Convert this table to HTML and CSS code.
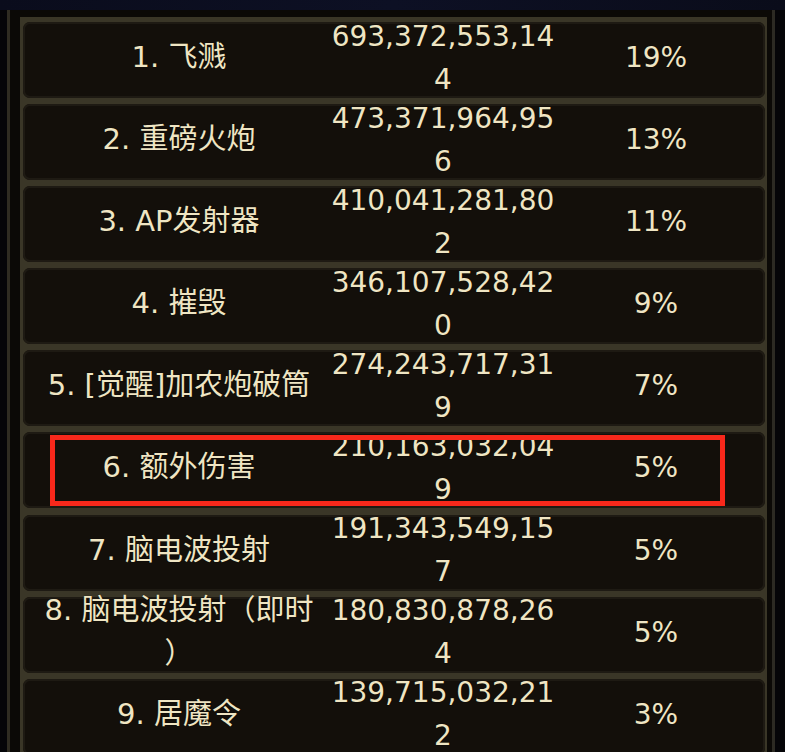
FILE: index.html
```html
<!DOCTYPE html>
<html lang="zh-CN">
<head>
  <meta charset="UTF-8">
  <title>伤害统计</title>
  <link rel="stylesheet" href="styles.css">
</head>
<body>
  <div class="topbar"></div>

  <div class="frame">
    <div class="list">
      <div class="row">
        <div class="name">1. 飞溅</div>
        <div class="dmg">693,372,553,144</div>
        <div class="pct">19%</div>
      </div>
      <div class="row">
        <div class="name">2. 重磅火炮</div>
        <div class="dmg">473,371,964,956</div>
        <div class="pct">13%</div>
      </div>
      <div class="row">
        <div class="name">3. AP发射器</div>
        <div class="dmg">410,041,281,802</div>
        <div class="pct">11%</div>
      </div>
      <div class="row">
        <div class="name">4. 摧毁</div>
        <div class="dmg">346,107,528,420</div>
        <div class="pct">9%</div>
      </div>
      <div class="row">
        <div class="name">5. [觉醒]加农炮破筒</div>
        <div class="dmg">274,243,717,319</div>
        <div class="pct">7%</div>
      </div>
      <div class="row marked">
        <div class="name">6. 额外伤害</div>
        <div class="dmg">210,163,032,049</div>
        <div class="pct">5%</div>
        <!-- 红框标注 -->
        <div class="mark"></div>
      </div>
      <div class="row">
        <div class="name">7. 脑电波投射</div>
        <div class="dmg">191,343,549,157</div>
        <div class="pct">5%</div>
      </div>
      <div class="row">
        <div class="name">8. 脑电波投射（即时<br>）</div>
        <div class="dmg">180,830,878,264</div>
        <div class="pct">5%</div>
      </div>
      <div class="row">
        <div class="name">9. 居魔令</div>
        <div class="dmg">139,715,032,212</div>
        <div class="pct">3%</div>
      </div>
    </div>
  </div>
</body>
</html>
```

FILE: styles.css
```css
html, body {
  margin: 0;
  height: 100%;
  overflow: hidden;
}

body {
  background: #050508;
  font-family: "DejaVu Sans", "Noto Sans CJK SC", sans-serif;
  font-size: 28px;
  color: #efe5c3;
}

.topbar {
  height: 10px;
  background: linear-gradient(90deg, #0a0c1c, #0d1024 50%, #0a0c1a);
}

.frame {
  margin-left: 7px;
  width: 768px;
  height: 760px;
  border-left: 3px solid #2f2c22;
  border-right: 3px solid #2c2a23;
  background: #0b0906;
  padding: 7px 5px 0 10px;
  box-sizing: border-box;
}

.list {
  background: #3a3627;
  padding: 5px 2px 0 3px;
  display: flex;
  flex-direction: column;
  gap: 6.1px;
}

/* строка таблицы */
.row {
  position: relative;
  height: 76px;
  padding: 0 10px 5px 17px;
  box-sizing: border-box;
  background: #130f0a;
  border-radius: 7px;
  box-shadow: inset 0 0 0 2px #1e1a13;
  display: flex;
  align-items: center;
  text-align: center;
  line-height: 43px;
  text-shadow: 0 0 1px rgba(0,0,0,0.9);
}

.name {
  width: 278px;
  flex: none;
  font-size: 29px;
}

.dmg {
  width: 232px;
  flex: none;
  margin-left: 9px;
  word-break: break-all;
}

.pct {
  width: 188px;
  flex: none;
  margin-left: 3px;
}

.mark {
  position: absolute;
  left: 27px;
  top: 3px;
  width: 675px;
  height: 71px;
  border: 5px solid #f8281b;
  box-sizing: border-box;
}
```
